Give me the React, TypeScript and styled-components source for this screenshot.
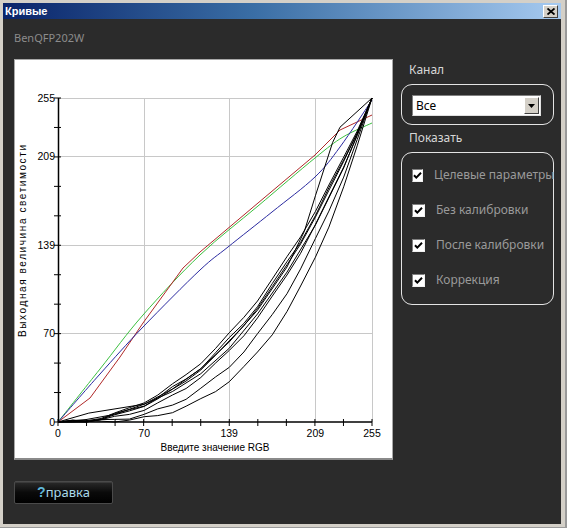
import React from 'react';
import styled, { createGlobalStyle } from 'styled-components';

const GlobalStyle = createGlobalStyle`
  html, body { margin: 0; padding: 0; background: #d4d0c8; }
  body { width: 567px; height: 528px; overflow: hidden; font-family: "Noto Sans", "Liberation Sans", sans-serif; }
`;

const Window = styled.div`
  box-sizing: border-box;
  width: 567px;
  height: 528px;
  display: flex;
  flex-direction: column;
  background: #d4d0c8;
  border-right: 2px solid #9a9a9a;
  border-bottom: 1px solid #9a9a9a;
  padding: 3px 4px 3px 3px;
`;

const TitleBar = styled.div`
  height: 16px;
  flex: none;
  display: flex;
  align-items: center;
  justify-content: space-between;
  padding: 0 3px 0 2px;
  background: linear-gradient(to right, #0a246a 0%, #3a6ea5 45%, #a6caf0 100%);
`;

const Title = styled.span`
  color: #fff;
  font-family: "Liberation Sans", Arial, sans-serif;
  font-weight: bold;
  font-size: 11px;
  line-height: 16px;
`;

const CloseButton = styled.div`
  box-sizing: border-box;
  width: 15px;
  height: 13px;
  background: #d4d0c8;
  border-style: solid;
  border-width: 1px;
  border-color: #ffffff #404040 #404040 #ffffff;
  display: flex;
  align-items: center;
  justify-content: center;
`;

const Body = styled.div`
  flex: 1;
  background: #2b2b2b;
  padding: 11px 0 0 11px;
  display: flex;
  flex-direction: column;
`;

const DeviceName = styled.div`
  color: #8c8c8c;
  font-size: 11px;
  line-height: 16px;
  margin-bottom: 13px;
`;

const MainRow = styled.div`
  display: flex;
  gap: 8px;
  align-items: flex-start;
`;

const ChartPanel = styled.div`
  width: 377px;
  height: 398px;
  background: #fff;
  border: 1px solid #a8a8a8;
  border-bottom: 2px solid #8a8a8a;
`;

const Side = styled.div`
  width: 153px;
  display: flex;
  flex-direction: column;
`;

const SectionLabel = styled.div<{ $top: number }>`
  color: #d6d6d6;
  font-size: 12px;
  line-height: 16px;
  padding-left: 8px;
  margin-top: ${(p) => p.$top}px;
  margin-bottom: 6px;
`;

const Group = styled.div<{ $pad: string }>`
  border: 1px solid #e4e4e4;
  border-radius: 11px;
  padding: ${(p) => p.$pad};
  display: flex;
  flex-direction: column;
  gap: 19px;
`;

const Select = styled.div`
  box-sizing: border-box;
  width: 129px;
  height: 21px;
  background: #fff;
  border-style: solid;
  border-width: 1px;
  border-color: #808080 #e0e0e0 #e0e0e0 #808080;
  display: flex;
  align-items: stretch;
`;

const SelectText = styled.span`
  flex: 1;
  color: #000;
  font-size: 12px;
  line-height: 19px;
  padding-left: 3px;
`;

const SelectArrow = styled.div`
  box-sizing: border-box;
  width: 15px;
  margin: 1px;
  background: #d4d0c8;
  border-style: solid;
  border-width: 1px;
  border-color: #ffffff #404040 #404040 #ffffff;
  display: flex;
  align-items: center;
  justify-content: center;
`;

const Row = styled.div`
  display: flex;
  align-items: center;
  gap: 11px;
  height: 16px;
`;

const Box = styled.div`
  box-sizing: border-box;
  width: 13px;
  height: 13px;
  background: #fff;
  border-style: solid;
  border-width: 1px;
  border-color: #808080 #f0f0f0 #f0f0f0 #808080;
  display: flex;
  align-items: center;
  justify-content: center;
`;

const RowLabel = styled.span`
  color: #9a9a9a;
  font-size: 12px;
  line-height: 16px;
  white-space: nowrap;
`;

const HelpButton = styled.div`
  box-sizing: border-box;
  margin-top: 21px;
  width: 99px;
  height: 23px;
  border: 1px solid #4a4a4a;
  border-radius: 2px;
  background: linear-gradient(to bottom, #2a2a2a 0%, #0a0a0a 50%, #000 100%);
  box-shadow: inset 0 1px 0 #3a3a3a;
  display: flex;
  align-items: center;
  justify-content: center;
  color: #a9d8ea;
  font-size: 13px;
  line-height: 21px;
`;

const HelpMark = styled.span`
  color: #5fb6d8;
  font-weight: bold;
  font-family: "Liberation Sans", Arial, sans-serif;
  font-size: 14px;
`;

const X0 = 43;
const X1 = 357;
const YT = 38;
const YB = 362;
const px = (x: number) => X0 + (x / 255) * (X1 - X0);
const py = (y: number) => YB - (y / 255) * (YB - YT);

type P = [number, number];
const pts = (arr: P[]) => arr.map(([a, b]) => `${a.toFixed(1)},${b.toFixed(1)}`).join(' ');

// Catmull-Rom smoothing into a cubic path
const smooth = (p: P[]) => {
  let d = `M${p[0][0].toFixed(1)} ${p[0][1].toFixed(1)}`;
  for (let i = 0; i < p.length - 1; i++) {
    const p0 = p[i - 1] || p[i];
    const p1 = p[i];
    const p2 = p[i + 1];
    const p3 = p[i + 2] || p2;
    const c1: P = [p1[0] + (p2[0] - p0[0]) / 6, p1[1] + (p2[1] - p0[1]) / 6];
    const c2: P = [p2[0] - (p3[0] - p1[0]) / 6, p2[1] - (p3[1] - p1[1]) / 6];
    d += ` C${c1[0].toFixed(1)} ${c1[1].toFixed(1)} ${c2[0].toFixed(1)} ${c2[1].toFixed(1)} ${p2[0].toFixed(1)} ${p2[1].toFixed(1)}`;
  }
  return d;
};

const XS = [0, 12, 23, 35, 46, 58, 70, 81, 93, 104, 116, 128, 139, 151, 162, 174, 186, 197, 209, 220, 232, 243, 255];

const gamma = (g: number, jitter = 0): P[] =>
  XS.map((x, i) => {
    const y = 255 * Math.pow(x / 255, g);
    const j = i > 0 && i < XS.length - 1 ? Math.sin(i * 1.7 + g * 3) * jitter : 0;
    return [px(x), py(Math.max(0, y + j))];
  });

const knee: P[] = ([
  [0, 0], [23, 2], [46, 6], [70, 14], [93, 26], [116, 42], [139, 63], [162, 88], [186, 122], [200, 150], [209, 178], [223, 220], [229, 232], [255, 255],
] as P[]).map(([x, y]) => [px(x), py(y)]);

const lifted: P[] = ([
  [0, 0], [25, 7], [70, 14], [93, 24], [116, 38], [139, 58], [162, 85], [186, 118], [209, 155], [232, 200], [255, 255],
] as P[]).map(([x, y]) => [px(x), py(y)]);

const shift = (arr: P[]): P[] => arr.map(([x, y]) => [x - 15, y - 60]);

const green = shift([
  [58, 422], [100, 369], [143, 315], [200, 255], [258, 206], [315, 158], [343, 137], [372, 123],
]);

const red = shift([
  [58, 422], [90, 398], [120, 357], [143, 323], [183, 268], [200, 252], [258, 203], [315, 155], [340, 130], [372, 115],
]);

const blue = shift([
  [58, 422], [100, 374], [143, 327], [200, 270], [228, 247], [272, 212], [315, 177], [340, 147], [372, 100],
]);

const ticks = Array.from({ length: 12 }, (_, i) => i);
const gridVals = [70, 139, 209, 255];
const labels = [0, 70, 139, 209, 255];

const Chart = () => (
  <svg width="377" height="398" viewBox="0 0 377 398">
    <g stroke="#c8c8c8" strokeWidth="1" shapeRendering="crispEdges">
      {gridVals.map((v) => (
        <line key={'v' + v} x1={Math.round(px(v)) + 0.5} y1={YT} x2={Math.round(px(v)) + 0.5} y2={YB} />
      ))}
      {gridVals.map((v) => (
        <line key={'h' + v} x1={X0} y1={Math.round(py(v)) + 0.5} x2={X1} y2={Math.round(py(v)) + 0.5} />
      ))}
    </g>
    <g fill="none" strokeWidth="1" strokeLinejoin="round">
      <path d={smooth(green)} stroke="#3cc040" />
      <polyline points={pts(red)} stroke="#b02828" />
      <path d={smooth(blue)} stroke="#2a2aa0" />
      <g stroke="#000">
        <polyline points={pts(gamma(2.15, 1))} />
        <polyline points={pts(gamma(2.25, 1.5))} />
        <polyline points={pts(gamma(2.3, 0.8))} />
        <polyline points={pts(gamma(2.5, 1))} />
        <polyline points={pts(gamma(2.9, 1.2))} />
        <polyline points={pts(gamma(3.4, 1))} />
        <polyline points={pts(knee)} />
        <polyline points={pts(lifted)} />
      </g>
    </g>
    <g stroke="#000" strokeWidth="1.5">
      <line x1={X0 + 0.5} y1={YT} x2={X0 + 0.5} y2={YB} />
      <line x1={X0} y1={YB} x2={X1} y2={YB} />
    </g>
    <g stroke="#000" strokeWidth="1">
      {ticks.map((i) => {
        const x = X0 + (i * (X1 - X0)) / 11;
        return <line key={'tx' + i} x1={x} y1={YB - 3} x2={x} y2={YB + 4} />;
      })}
      {ticks.map((i) => {
        const y = YB - (i * (YB - YT)) / 11;
        return <line key={'ty' + i} x1={X0 - 4} y1={y} x2={X0 + 3} y2={y} />;
      })}
    </g>
    <g fontFamily='"Liberation Sans", Arial, sans-serif' fontSize="10.5" fill="#000">
      {labels.map((v) => (
        <text key={'lx' + v} x={px(v)} y={YB + 15} textAnchor="middle">{v}</text>
      ))}
      {labels.map((v) => (
        <text key={'ly' + v} x={X0 - 3} y={py(v) + 4} textAnchor="end">{v}</text>
      ))}
      <text x={200} y={391} textAnchor="middle" fontSize="10">Введите значение RGB</text>
      <text
        x={0}
        y={0}
        fontSize="10"
        textAnchor="middle"
        textLength="192"
        lengthAdjust="spacing"
        transform="translate(10.5 181) rotate(-90)"
      >
        Выходная величина светимости
      </text>
    </g>
  </svg>
);

const Check = () => (
  <svg width="9" height="9" viewBox="0 0 9 9">
    <path d="M1 4.2 L3.3 6.6 L8 1.8" fill="none" stroke="#000" strokeWidth="2" />
  </svg>
);

const items = ['Целевые параметры', 'Без калибровки', 'После калибровки', 'Коррекция'];

export default function App() {
  return (
    <>
      <GlobalStyle />
      <Window>
        <TitleBar>
          <Title>Кривые</Title>
          <CloseButton>
            <svg width="8" height="7" viewBox="0 0 8 7">
              <path d="M0.5 0.5 L7.5 6.5 M7.5 0.5 L0.5 6.5" stroke="#000" strokeWidth="1.8" />
            </svg>
          </CloseButton>
        </TitleBar>
        <Body>
          <DeviceName>BenQFP202W</DeviceName>
          <MainRow>
            <ChartPanel>
              <Chart />
            </ChartPanel>
            <Side>
              <SectionLabel $top={3}>Канал</SectionLabel>
              <Group $pad="10px 12px 8px 10px">
                <Select>
                  <SelectText>Все</SelectText>
                  <SelectArrow>
                    <svg width="7" height="4" viewBox="0 0 7 4">
                      <path d="M0 0 H7 L3.5 4 Z" fill="#000" />
                    </svg>
                  </SelectArrow>
                </Select>
              </Group>
              <SectionLabel $top={5}>Показать</SectionLabel>
              <Group $pad="14px 8px 16px 10px">
                {items.map((t) => (
                  <Row key={t}>
                    <Box>
                      <Check />
                    </Box>
                    <RowLabel>{t}</RowLabel>
                  </Row>
                ))}
              </Group>
            </Side>
          </MainRow>
          <HelpButton>
            <HelpMark>?</HelpMark>правка
          </HelpButton>
        </Body>
      </Window>
    </>
  );
}
